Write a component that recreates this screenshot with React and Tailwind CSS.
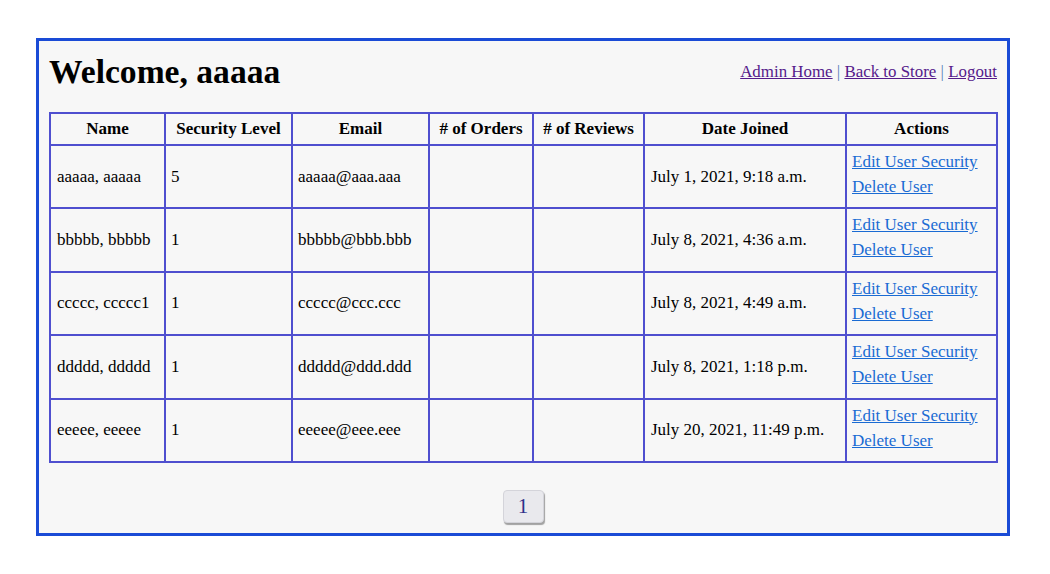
import React from 'react';

const users = [
  { name: 'aaaaa, aaaaa', level: '5', email: 'aaaaa@aaa.aaa', joined: 'July 1, 2021, 9:18 a.m.' },
  { name: 'bbbbb, bbbbb', level: '1', email: 'bbbbb@bbb.bbb', joined: 'July 8, 2021, 4:36 a.m.' },
  { name: 'ccccc, ccccc1', level: '1', email: 'ccccc@ccc.ccc', joined: 'July 8, 2021, 4:49 a.m.' },
  { name: 'ddddd, ddddd', level: '1', email: 'ddddd@ddd.ddd', joined: 'July 8, 2021, 1:18 p.m.' },
  { name: 'eeeee, eeeee', level: '1', email: 'eeeee@eee.eee', joined: 'July 20, 2021, 11:49 p.m.' },
];

const headers = ['Name', 'Security Level', 'Email', '# of Orders', '# of Reviews', 'Date Joined', 'Actions'];

export default function App() {
  return (
    <div className="bg-white min-h-screen pt-[38px] text-[17px] text-black" style={{ fontFamily: '"Liberation Serif", "Times New Roman", serif' }}>
      <div className="ml-[36px] w-[974px] h-[498px] border-[3px] border-[#1a4bd6] bg-[#f7f7f7] px-[10px] pt-[11px] pb-[11px] flex flex-col">
        <div className="flex justify-between items-center h-[39px]">
          <h1 className="text-[33.6px] font-bold leading-[39px]">Welcome, aaaaa</h1>
          <div className="leading-[normal] text-[16.9px]">
            <a href="#" className="underline text-[#551a8b]">Admin Home</a>
            <span className="text-[#5a7fb8]"> | </span>
            <a href="#" className="underline text-[#551a8b]">Back to Store</a>
            <span className="text-[#5a7fb8]"> | </span>
            <a href="#" className="underline text-[#551a8b]">Logout</a>
          </div>
        </div>

        <table className="mt-[21px] w-[948px] table-fixed border-collapse border-2 border-[#4f4fcf]">
          <colgroup>
            <col className="w-[115px]" />
            <col className="w-[127px]" />
            <col className="w-[137px]" />
            <col className="w-[104px]" />
            <col className="w-[111px]" />
            <col className="w-[202px]" />
            <col className="w-[151px]" />
          </colgroup>
          <thead>
            <tr>
              {headers.map((h) => (
                <th key={h} className="border-2 border-[#4f4fcf] px-[4px] py-[5px] font-bold text-center leading-[normal] whitespace-nowrap">
                  {h}
                </th>
              ))}
            </tr>
          </thead>
          <tbody>
            {users.map((u) => (
              <tr key={u.email}>
                <td className="border-2 border-[#4f4fcf] px-[6px] align-middle leading-[normal]">{u.name}</td>
                <td className="border-2 border-[#4f4fcf] px-[5px] align-middle leading-[normal]">{u.level}</td>
                <td className="border-2 border-[#4f4fcf] px-[5px] align-middle leading-[normal]">{u.email}</td>
                <td className="border-2 border-[#4f4fcf] px-[5px] align-middle"></td>
                <td className="border-2 border-[#4f4fcf] px-[5px] align-middle"></td>
                <td className="border-2 border-[#4f4fcf] px-[6px] align-middle leading-[normal] whitespace-nowrap">{u.joined}</td>
                <td className="border-2 border-[#4f4fcf] px-[5px] pt-[3px] pb-[8.4px] align-top">
                  <a href="#" className="block leading-[25px] underline text-[#1a6bd3] whitespace-nowrap">Edit User Security</a>
                  <a href="#" className="block leading-[25px] underline text-[#1a6bd3] whitespace-nowrap">Delete User</a>
                </td>
              </tr>
            ))}
          </tbody>
        </table>

        <div className="mt-[27px] flex justify-center">
          <button className="w-[41px] h-[33px] rounded-[4px] bg-[#e9e9ed] border border-[#d4d4da] shadow-[1px_2px_1px_rgba(0,0,0,0.35)] text-[21px] text-[#2f2f8a] leading-none">
            1
          </button>
        </div>
      </div>
    </div>
  );
}
